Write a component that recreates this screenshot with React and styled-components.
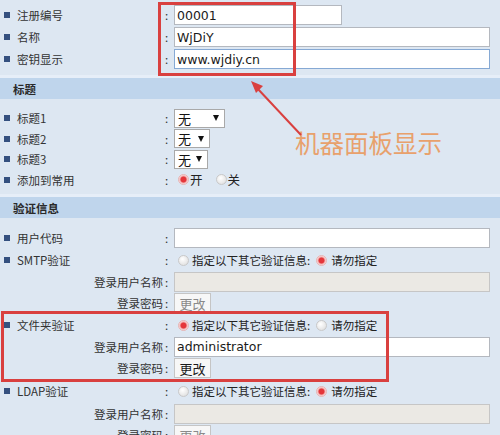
import React from 'react';
import styled, { createGlobalStyle } from 'styled-components';

const Global = createGlobalStyle`
  html, body { margin: 0; padding: 0; background: #dde7f2; }
  body {
    font-family: "Noto Sans CJK SC", "Liberation Sans", sans-serif;
    font-size: 11.5px;
    color: #333;
  }
`;

const Page = styled.div`
  position: relative;
  width: 500px;
  height: 435px;
  overflow: hidden;
  background: #dde7f2;
`;

const Section = styled.div`
  position: relative;
  padding: ${p => p.$pad};
`;

const Header = styled.div`
  height: ${p => p.$h}px;
  display: flex;
  align-items: center;
  padding-left: 13px;
  background: #bfd5ec;
  box-shadow: 0 -3px 0 #e6eef8;
  font-weight: bold;
  color: #2a2a2a;
  font-size: 11.5px;
`;

const Row = styled.div`
  display: grid;
  grid-template-columns: 163px 11px 316px;
  align-items: center;
  height: ${p => p.$h}px;
`;

const Label = styled.div`
  display: flex;
  align-items: center;
  gap: 7px;
  padding-left: 4px;
  white-space: nowrap;
  &::before {
    content: '';
    width: 6px;
    height: 6px;
    background: #34507f;
  }
`;

const SubLabel = styled.div`
  text-align: right;
  white-space: nowrap;
`;

const Colon = styled.div`
  padding-left: 2px;
  color: #333;
`;

const Cell = styled.div`
  display: flex;
  align-items: center;
`;

const Input = styled.div`
  box-sizing: border-box;
  width: ${p => p.$w || 316}px;
  height: 20px;
  border: 1px solid ${p => (p.$focus ? '#86a9d4' : p.$disabled ? '#c6c6c6' : '#b4b8bf')};
  background: ${p => (p.$disabled ? '#ebe9e4' : '#fff')};
  display: flex;
  align-items: center;
  padding-left: 2px;
  font-family: "DejaVu Sans", Verdana, sans-serif;
  font-size: 12.5px;
  color: #1a1a1a;
`;

const Select = styled.div`
  box-sizing: border-box;
  width: ${p => p.$w}px;
  height: 19px;
  border: 1px solid #a9a9a9;
  background: #fff;
  display: flex;
  align-items: center;
  justify-content: space-between;
  padding: 0 5px 0 3px;
  font-size: 13px;
  color: #111;
`;

const Caret = styled.span`
  width: 0;
  height: 0;
  border-left: 3.5px solid transparent;
  border-right: 3.5px solid transparent;
  border-top: 6px solid #111;
`;

const RadioGroup = styled.div`
  display: flex;
  align-items: center;
  padding-left: 4px;
  color: #222;
`;

const Radio = styled.span`
  box-sizing: border-box;
  width: 11px;
  height: 11px;
  border-radius: 50%;
  margin-right: ${p => p.$mr ?? 3}px;
  border: 1px solid ${p => (p.$on ? '#e7b3b3' : '#c9c9c9')};
  background: ${p =>
    p.$on
      ? 'radial-gradient(circle at 50% 50%, #e4363a 0 2.6px, #f2a7a8 3.4px, #fdf0f0 5px)'
      : 'radial-gradient(circle at 40% 35%, #ffffff 0, #e9e9e9 60%, #d8d8d8 100%)'};
`;

const RadioText = styled.span`
  margin-right: ${p => p.$mr || 0}px;
  font-size: ${p => p.$fs || 11.5}px;
`;

const Button = styled.div`
  box-sizing: border-box;
  width: 37px;
  height: 20px;
  border: 1px solid #c5c5c5;
  background: #f7f7f7;
  display: flex;
  align-items: center;
  justify-content: center;
  font-size: 13px;
  color: ${p => (p.$disabled ? '#8a8a8a' : '#1a1a1a')};
`;

const MarkBox = styled.div`
  position: absolute;
  left: ${p => p.$l}px;
  top: ${p => p.$t}px;
  width: ${p => p.$w}px;
  height: ${p => p.$hh}px;
  border: 3px solid #d9403f;
  box-sizing: border-box;
  pointer-events: none;
`;

const Group = styled.div`
  position: relative;
`;

const Note = styled.div`
  position: absolute;
  left: 295px;
  top: 131px;
  font-size: 24.5px;
  line-height: 1;
  color: #e8a16c;
  white-space: nowrap;
`;

const Arrow = styled.svg`
  position: absolute;
  left: 0;
  top: 0;
  pointer-events: none;
`;

const AuthBlock = ({ name, on, enabled, userValue, userH, topH }) => (
  <>
    <Row $h={topH}>
      <Label>{name}</Label>
      <Colon>:</Colon>
      <RadioGroup>
        <Radio $on={on} />
        <RadioText $mr={6}>指定以下其它验证信息:</RadioText>
        <Radio $on={!on} $mr={4} />
        <RadioText>请勿指定</RadioText>
      </RadioGroup>
    </Row>
    <Row $h={userH}>
      <SubLabel>登录用户名称</SubLabel>
      <Colon>:</Colon>
      <Cell>
        <Input $disabled={!enabled}>{userValue}</Input>
      </Cell>
    </Row>
    <Row $h={22}>
      <SubLabel>登录密码</SubLabel>
      <Colon>:</Colon>
      <Cell>
        <Button $disabled={!enabled}>更改</Button>
      </Cell>
    </Row>
  </>
);

export default function App() {
  return (
    <Page>
      <Global />
      <Section $pad="4px 0 8px 0">
        <Row $h={22}>
          <Label>注册编号</Label>
          <Colon>:</Colon>
          <Cell>
            <Input $w={168}>00001</Input>
          </Cell>
        </Row>
        <Row $h={22}>
          <Label>名称</Label>
          <Colon>:</Colon>
          <Cell>
            <Input>WjDiY</Input>
          </Cell>
        </Row>
        <Row $h={22}>
          <Label>密钥显示</Label>
          <Colon>:</Colon>
          <Cell>
            <Input $focus>www.wjdiy.cn</Input>
          </Cell>
        </Row>
        <MarkBox $l={158} $t={2} $w={138} $hh={74} />
      </Section>

      <Header $h={21}>标题</Header>

      <Section $pad="9px 0 7px 0">
        {[
          ['标题1', 51],
          ['标题2', 36],
          ['标题3', 34],
        ].map(([t, w]) => (
          <Row $h={20.5} key={t}>
            <Label>{t}</Label>
            <Colon>:</Colon>
            <Cell>
              <Select $w={w}>
                <span>无</span>
                <Caret />
              </Select>
            </Cell>
          </Row>
        ))}
        <Row $h={20.5}>
          <Label>添加到常用</Label>
          <Colon>:</Colon>
          <RadioGroup>
            <Radio $on $mr={1} />
            <RadioText $mr={13} $fs={12.5}>开</RadioText>
            <Radio $mr={1} />
            <RadioText $fs={12.5}>关</RadioText>
          </RadioGroup>
        </Row>
      </Section>

      <Header $h={21}>验证信息</Header>

      <Section $pad="9px 0 0 0">
        <Row $h={22}>
          <Label>用户代码</Label>
          <Colon>:</Colon>
          <Cell>
            <Input />
          </Cell>
        </Row>
        <AuthBlock name="SMTP验证" on={false} enabled={false} userValue="" userH={21} topH={22} />
        <Group>
          <AuthBlock name="文件夹验证" on enabled userValue="administrator" userH={21} topH={22} />
          <MarkBox $l={1} $t={-3} $w={388} $hh={71} />
        </Group>
        <AuthBlock name="LDAP验证" on={false} enabled={false} userValue="" userH={21} topH={24} />
      </Section>

      <Note>机器面板显示</Note>
      <Arrow width="500" height="435" viewBox="0 0 500 435">
        <line x1="301" y1="135" x2="257" y2="88" stroke="#d9403f" strokeWidth="2" />
        <polygon points="251,81 263,86 256,93" fill="#d9403f" />
      </Arrow>
    </Page>
  );
}
